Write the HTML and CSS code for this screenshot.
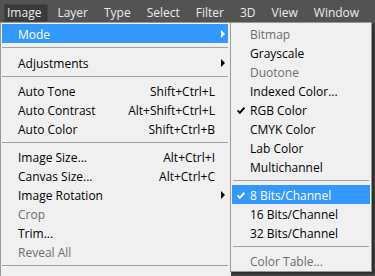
FILE: index.html
```html
<!DOCTYPE html>
<html lang="en">
<head>
    <meta charset="UTF-8">
    <title>Image Menu</title>
    <link rel="stylesheet" href="styles.css">
</head>
<body>
    <div id="menubar">
        <span class="bar-item open">Image</span>
        <span class="bar-item">Layer</span>
        <span class="bar-item">Type</span>
        <span class="bar-item">Select</span>
        <span class="bar-item">Filter</span>
        <span class="bar-item">3D</span>
        <span class="bar-item">View</span>
        <span class="bar-item">Window</span>
        <span class="bar-item">Help</span>
    </div>
    <div id="menus">
        <div class="menu main">
            <div class="row active"><span class="label">Mode</span><span class="arrow"></span></div>
            <div class="sep first"></div>
            <div class="row"><span class="label">Adjustments</span><span class="arrow"></span></div>
            <div class="sep"></div>
            <div class="row"><span class="label">Auto Tone</span><span class="key">Shift+Ctrl+L</span><span class="noarrow"></span></div>
            <div class="row"><span class="label">Auto Contrast</span><span class="key">Alt+Shift+Ctrl+L</span><span class="noarrow"></span></div>
            <div class="row"><span class="label">Auto Color</span><span class="key">Shift+Ctrl+B</span><span class="noarrow"></span></div>
            <div class="sep"></div>
            <div class="row"><span class="label">Image Size...</span><span class="key">Alt+Ctrl+I</span><span class="noarrow"></span></div>
            <div class="row"><span class="label">Canvas Size...</span><span class="key">Alt+Ctrl+C</span><span class="noarrow"></span></div>
            <div class="row"><span class="label">Image Rotation</span><span class="arrow"></span></div>
            <div class="row disabled"><span class="label">Crop</span></div>
            <div class="row"><span class="label">Trim...</span></div>
            <div class="row disabled"><span class="label">Reveal All</span></div>
            <div class="sep"></div>
        </div>
        <div class="menu sub">
            <div class="row disabled"><span class="check"></span><span class="label">Bitmap</span></div>
            <div class="row"><span class="check"></span><span class="label">Grayscale</span></div>
            <div class="row disabled"><span class="check"></span><span class="label">Duotone</span></div>
            <div class="row"><span class="check"></span><span class="label">Indexed Color...</span></div>
            <div class="row"><span class="check"><svg viewBox="0 0 8 7"><path d="M0.6 3.4 L2.8 5.9 L7.4 0.7" fill="none" stroke="currentColor" stroke-width="1.8"/></svg></span><span class="label">RGB Color</span></div>
            <div class="row"><span class="check"></span><span class="label">CMYK Color</span></div>
            <div class="row"><span class="check"></span><span class="label">Lab Color</span></div>
            <div class="row"><span class="check"></span><span class="label">Multichannel</span></div>
            <div class="sep"></div>
            <div class="row active"><span class="check"><svg viewBox="0 0 8 7"><path d="M0.6 3.4 L2.8 5.9 L7.4 0.7" fill="none" stroke="currentColor" stroke-width="1.8"/></svg></span><span class="label">8 Bits/Channel</span></div>
            <div class="row"><span class="check"></span><span class="label">16 Bits/Channel</span></div>
            <div class="row"><span class="check"></span><span class="label">32 Bits/Channel</span></div>
            <div class="sep"></div>
            <div class="row disabled"><span class="check"></span><span class="label">Color Table...</span></div>
        </div>
    </div>
</body>
</html>
```
FILE: styles.css
```css
:root {
    --bar: #535353;
    --barfg: #ececec;
    --menubg: #f0f0f0;
    --border: #979797;
    --blue: #3399ff;
    --disable: #6d6d6d;
    --line: #a0a0a0;
}
* {
    margin: 0;
    padding: 0;
    box-sizing: border-box;
}
html, body {
    height: 100%;
    overflow: hidden;
}
body {
    background-color: #4a4a4a;
    font-family: 'Open Sans', sans-serif;
    font-size: 12px;
    color: #000;
}
#menubar {
    height: 22px;
    display: flex;
    align-items: flex-end;
    padding-left: 4px;
    background-color: var(--bar);
    color: var(--barfg);
    white-space: nowrap;
}
.bar-item {
    height: 18px;
    line-height: 17px;
    padding: 0 7px 0 3px;
    margin-right: 6px;
}
.bar-item.open {
    background-color: #3a3a3a;
    box-shadow: inset 0 0 0 1px #444;
}
#menus {
    display: flex;
    align-items: flex-start;
}
.menu {
    background-color: var(--menubg);
    border: 1px solid var(--border);
    padding: 1px;
}
.main {
    width: 231px;
    height: 260px;
    border-right: none;
    border-bottom: none;
}
.sub {
    width: 142px;
    margin-left: -1px;
    box-shadow: 2px 2px 2px rgba(0, 0, 0, 0.45);
}
.row {
    height: 19px;
    padding-top: 2px;
    display: flex;
    align-items: center;
    white-space: nowrap;
}
.main .row {
    width: 226px;
    padding-left: 16px;
}
.label {
    flex: 1;
}
.key {
    text-align: right;
}
.arrow, .noarrow {
    width: 13px;
    height: 17px;
    flex: none;
    position: relative;
}
.arrow::after {
    content: '';
    position: absolute;
    left: 6px;
    top: 4px;
    border-left: 4px solid #000;
    border-top: 4px solid transparent;
    border-bottom: 4px solid transparent;
}
.row.active {
    background-color: var(--blue);
    color: #fff;
}
.row.active .arrow::after {
    border-left-color: #fff;
}
.row.disabled {
    color: var(--disable);
}
.sep {
    height: 9px;
    padding-top: 4px;
}
.sep.first {
    height: 10px;
}
.sep::before {
    content: '';
    display: block;
    height: 1px;
    background-color: var(--line);
}
.main .sep {
    width: 226px;
}
.sub .sep {
    margin: 0 1px;
}
.check {
    width: 18px;
    height: 17px;
    flex: none;
    display: flex;
    align-items: center;
    padding-left: 5px;
}
.check svg {
    width: 8px;
    height: 7px;
}
```
